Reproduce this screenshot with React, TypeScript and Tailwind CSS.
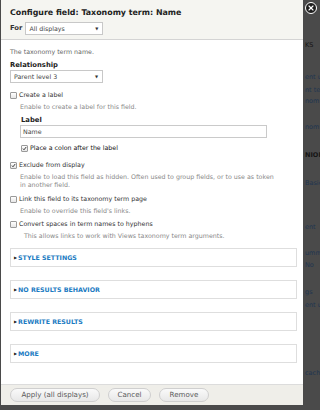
import { X } from 'lucide-react';

const font = { fontFamily: '"DejaVu Sans", Verdana, sans-serif' };

function Checkbox({ checked }: { checked?: boolean }) {
  return (
    <span className="w-[7px] h-[7px] shrink-0 rounded-[1px] border border-[#9a9a9a] bg-gradient-to-b from-white to-[#e6e6e6] flex items-center justify-center">
      {checked && (
        <svg viewBox="0 0 8 8" className="w-[7px] h-[7px]">
          <path d="M1.5 4.2 L3.2 6 L6.8 1.5" fill="none" stroke="#222" strokeWidth="1.4" />
        </svg>
      )}
    </span>
  );
}

function Select({ value, width }: { value: string; width: string }) {
  return (
    <div className={`${width} h-[13px] border border-[#c8c8c8] bg-white flex items-center justify-between pl-[3px] pr-[4px] text-[6.3px] text-[#444]`}>
      <span>{value}</span>
      <span className="text-[4px] text-[#333]">▼</span>
    </div>
  );
}

function Fieldset({ title }: { title: string }) {
  return (
    <div className="h-[19px] border border-[#dedede] flex items-center pl-[3px] gap-[1px]">
      <span className="text-[4px] text-[#222]">▶</span>
      <span className="text-[6.3px] font-bold text-[#1a7bc2] uppercase">{title}</span>
    </div>
  );
}

function Button({ label, width }: { label: string; width: string }) {
  return (
    <div className={`${width} h-[14px] rounded-full border border-[#cfcfcf] bg-gradient-to-b from-[#fafafa] to-[#e8e8e8] flex items-center justify-center text-[7.1px] text-[#5a5a5a]`}>
      {label}
    </div>
  );
}

export default function App() {
  return (
    <div className="relative w-[320px] h-[410px] bg-[#4a4a4a] flex overflow-hidden" style={font}>
      {/* Dialog */}
      <div className="ml-[1px] w-[302px] h-[405px] bg-white flex flex-col shrink-0">
        <div className="h-[40px] bg-[#f5f5f1] border-b border-[#d4d4d4] px-[9px] pt-[7px] flex flex-col gap-[3px]">
          <div className="text-[7.9px] font-bold text-[#222] leading-[12px]">Configure field: Taxonomy term: Name</div>
          <div className="flex items-center gap-[3px]">
            <span className="text-[6.8px] font-bold text-[#333]">For</span>
            <Select value="All displays" width="w-[78px]" />
          </div>
        </div>

        <div className="flex-1 px-[9px] pt-[8px] flex flex-col text-[6.3px] text-[#333]">
          <div className="text-[#666] h-[8px] leading-[8px]">The taxonomy term name.</div>
          <div className="mt-[5px] text-[6.8px] font-bold text-[#222] leading-[8px]">Relationship</div>
          <div className="mt-[1px]">
            <Select value="Parent level 3" width="w-[93px]" />
          </div>
          <div className="mt-[8px] flex items-center gap-[2px] leading-[8px]">
            <Checkbox />
            <span>Create a label</span>
          </div>
          <div className="mt-[4px] ml-[10px] text-[#888] leading-[8px]">Enable to create a label for this field.</div>
          <div className="mt-[5px] ml-[11px] text-[6.8px] font-bold text-[#222] leading-[8px]">Label</div>
          <div className="mt-[1px] ml-[10px] w-[247px] h-[13px] border border-[#cacaca] flex items-center pl-[2px] text-[#444]">Name</div>
          <div className="mt-[6px] ml-[11px] flex items-center gap-[2px] leading-[8px]">
            <Checkbox checked />
            <span className="text-[#111]">Place a colon after the label</span>
          </div>
          <div className="mt-[9px] flex items-center gap-[2px] leading-[8px]">
            <Checkbox checked />
            <span>Exclude from display</span>
          </div>
          <div className="mt-[4px] ml-[10px] text-[#888] leading-[8px] pr-[16px]">
            Enable to load this field as hidden. Often used to group fields, or to use as token in another field.
          </div>
          <div className="mt-[6px] flex items-center gap-[2px] leading-[8px]">
            <Checkbox />
            <span>Link this field to its taxonomy term page</span>
          </div>
          <div className="mt-[4px] ml-[10px] text-[#888] leading-[8px]">Enable to override this field's links.</div>
          <div className="mt-[5px] flex items-center gap-[2px] leading-[8px]">
            <Checkbox />
            <span>Convert spaces in term names to hyphens</span>
          </div>
          <div className="mt-[4px] ml-[14px] text-[#888] leading-[8px]">This allows links to work with Views taxonomy term arguments.</div>
          <div className="mt-[8px] mr-[-3px] flex flex-col gap-[13px]">
            <Fieldset title="Style settings" />
            <Fieldset title="No results behavior" />
            <Fieldset title="Rewrite results" />
            <Fieldset title="More" />
          </div>
        </div>

        <div className="h-[21px] bg-[#efeee9] border-t border-[#dcdcdc] px-[9px] flex items-center gap-[8px]">
          <Button label="Apply (all displays)" width="w-[90px]" />
          <Button label="Cancel" width="w-[43px]" />
          <Button label="Remove" width="w-[50px]" />
        </div>
      </div>

      {/* Page behind the overlay */}
      <div className="flex-1 pl-[2px] flex flex-col text-[6.5px] leading-[8px] text-[#1f3550] whitespace-nowrap overflow-hidden">
        <div className="mt-[41px] text-[#151515]">KS</div>
        <div className="mt-[24px]">ent u</div>
        <div className="mt-[5px]">nt te</div>
        <div className="mt-[3px]">nomy</div>
        <div className="mt-[18px]">nomy</div>
        <div className="mt-[20px] font-bold text-[#151515]">NIOR</div>
        <div className="mt-[20px]">Basic</div>
        <div className="mt-[36px]">ent</div>
        <div className="mt-[18px]">umm-</div>
        <div className="mt-[4px]">No</div>
        <div className="mt-[19px]">gs</div>
        <div className="mt-[5px]">ent us</div>
        <div className="mt-[60px]">cach</div>
      </div>

      {/* Close button */}
      <div className="absolute left-[305px] top-[2px] w-[12px] h-[12px] rounded-full bg-[#1e1e1e] border border-white flex items-center justify-center">
        <X size={8} strokeWidth={3.5} color="white" />
      </div>
    </div>
  );
}
